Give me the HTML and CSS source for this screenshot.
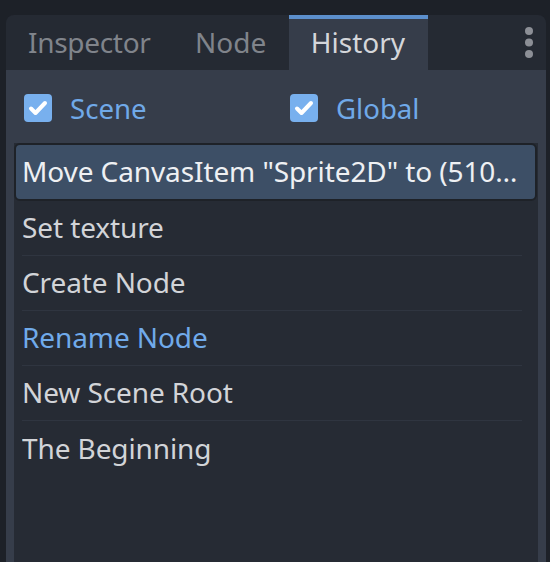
FILE: index.html
```html
<!DOCTYPE html>
<html>
<head>
<meta charset="utf-8">
<link rel="stylesheet" href="styles.css">
</head>
<body>
<div class="panel">
  <div class="tabbar">
    <div class="tab">Inspector</div>
    <div class="tab">Node</div>
    <div class="tab active">History</div>
    <div class="menu">
      <svg width="10" height="34" viewBox="0 0 10 34"><circle cx="5" cy="5" r="4" fill="#8c8f96"/><circle cx="5" cy="16.5" r="4" fill="#8c8f96"/><circle cx="5" cy="28" r="4" fill="#8c8f96"/></svg>
    </div>
  </div>
  <div class="body">
    <div class="checks">
      <label class="check"><span class="box"><svg width="28" height="28" viewBox="0 0 28 28"><path d="M7 14.5 L11.5 19 L21 9" fill="none" stroke="#fff" stroke-width="4" stroke-linecap="round" stroke-linejoin="round"/></svg></span><span class="label">Scene</span></label>
      <label class="check"><span class="box"><svg width="28" height="28" viewBox="0 0 28 28"><path d="M7 14.5 L11.5 19 L21 9" fill="none" stroke="#fff" stroke-width="4" stroke-linecap="round" stroke-linejoin="round"/></svg></span><span class="label">Global</span></label>
    </div>
    <div class="list">
      <div class="row selected">Move CanvasItem "Sprite2D" to (510…</div>
      <div class="row">Set texture</div>
      <div class="row">Create Node</div>
      <div class="row current">Rename Node</div>
      <div class="row">New Scene Root</div>
      <div class="row last">The Beginning</div>
    </div>
  </div>
</div>
</body>
</html>
```
FILE: styles.css
```css
html, body {
  margin: 0;
  padding: 0;
  background: #1d2128;
  width: 550px;
  height: 562px;
  overflow: hidden;
  font-family: "Noto Sans", "Open Sans", sans-serif;
}
.panel {
  margin: 15px 4px 0 6px;
  height: 547px;
  border-radius: 8px 8px 0 0;
  overflow: hidden;
  display: flex;
  flex-direction: column;
}
.tabbar {
  height: 55px;
  background: #252a33;
  display: flex;
  align-items: stretch;
}
.tab {
  padding: 0 22.5px 2px 22px;
  display: flex;
  align-items: center;
  font-size: 28px;
  color: #80848b;
}
.tab:first-child { letter-spacing: -0.3px; }
.tab.active {
  background: #363d4a;
  color: #d4d6da;
  box-shadow: inset 0 4px 0 #5c8fcc;
}
.menu {
  margin-left: auto;
  display: flex;
  align-items: center;
  justify-content: flex-end;
  padding-right: 12px;
}
.menu svg { display: block; }
.body {
  flex: 1;
  background: #363d4a;
  padding: 0 8px;
  display: flex;
  flex-direction: column;
}
.checks {
  display: grid;
  grid-template-columns: 266px 1fr;
  padding: 24px 0 21px 10px;
}
.check {
  display: flex;
  align-items: center;
  height: 28px;
  gap: 18px;
}
.box {
  width: 28px;
  height: 28px;
  border-radius: 4px;
  background: #78b0ee;
  display: block;
}
.box svg { display: block; }
.label {
  font-size: 27.6px;
  color: #70a9e8;
  line-height: 28px;
}
.list {
  flex: 1;
  background: #262b34;
}
.row {
  margin: 0 16px 0 8px;
  padding-left: 0;
  padding-bottom: 2px;
  box-sizing: border-box;
  height: 55px;
  border-bottom: 1px solid #2f3540;
  font-size: 28px;
  letter-spacing: -0.1px;
  color: #d2d4d8;
  display: flex;
  align-items: center;
  white-space: nowrap;
  overflow: hidden;
}
.row.selected {
  margin: 0 1px 0 0;
  padding: 0 0 2px 6px;
  height: 58px;
  border: 2px solid #1e2228;
  border-radius: 6px;
  background: #3d4f66;
  color: #eef0f3;
}
.row.current { color: #70aaea; }
.row.last { border-bottom: none; }
```
